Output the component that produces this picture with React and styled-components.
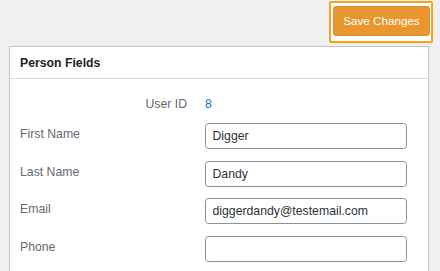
import React from 'react';
import styled, { createGlobalStyle } from 'styled-components';

const GlobalStyle = createGlobalStyle`
	html, body {
		margin: 0;
		padding: 0;
		background: #f0f0f1;
	}
	body {
		font-family: "Liberation Sans", Arial, sans-serif;
		color: #1d2327;
	}
`;

const fields = [
	{ label: 'First Name', value: 'Digger' },
	{ label: 'Last Name', value: 'Dandy' },
	{ label: 'Email', value: 'diggerdandy@testemail.com' },
	{ label: 'Phone', value: '' }
];

export default function App() {
	return (
		<Page>
			<GlobalStyle />
			<TopBar>
				<FocusRing>
					<SaveButton type="button">Save Changes</SaveButton>
				</FocusRing>
			</TopBar>
			<Panel>
				<PanelHeader>Person Fields</PanelHeader>
				<FieldGrid>
					<FieldLabel align="right" top="0">User ID</FieldLabel>
					<IdValue>8</IdValue>
					{fields.map((f) => (
						<React.Fragment key={f.label}>
							<FieldLabel>{f.label}</FieldLabel>
							<TextInput type="text" defaultValue={f.value} />
						</React.Fragment>
					))}
				</FieldGrid>
			</Panel>
		</Page>
	);
}

const Page = styled.div`
	width: 440px;
	height: 271px;
	overflow: hidden;
`;

const TopBar = styled.div`
	display: flex;
	justify-content: flex-end;
	padding: 1px 7px 0 0;
`;

const FocusRing = styled.div`
	display: flex;
	border: 2px solid #f5a31c;
	border-radius: 2px;
	padding: 3px 1px 5px 2px;
	background: #fff;
`;

const SaveButton = styled.button`
	width: 97px;
	height: 30px;
	padding: 0;
	border: 1px solid #dc8c2a;
	border-radius: 3px;
	background: #e9962f;
	color: #fff;
	font-family: "Liberation Sans", Arial, sans-serif;
	font-size: 11.7px;
	line-height: 14px;
	cursor: pointer;
`;

const Panel = styled.section`
	width: 420px;
	box-sizing: border-box;
	margin: 3px 0 0 9px;
	border: 1px solid #c3c4c7;
	background: #fff;
	padding-bottom: 24px;
`;

const PanelHeader = styled.h2`
	margin: 0;
	padding: 9px 10px 8px;
	border-bottom: 1px solid #dcdcde;
	font-size: 12.25px;
	line-height: 14px;
	font-weight: 700;
	color: #1d2327;
`;

const FieldGrid = styled.div`
	display: grid;
	grid-template-columns: 167px 202px;
	column-gap: 18px;
	row-gap: 11.75px;
	padding: 18px 0 0 10px;
	font-size: 12.25px;
	line-height: 14px;
`;

const FieldLabel = styled.label`
	padding-top: ${(props) => (props.top !== undefined ? props.top : '4px')};
	text-align: ${(props) => props.align || 'left'};
	color: #646970;
`;

const IdValue = styled.span`
	color: #2271b1;
`;

const TextInput = styled.input`
	box-sizing: border-box;
	width: 202px;
	height: 26px;
	margin: 0;
	padding: 0 6.5px;
	border: 1px solid #8c8f94;
	border-radius: 3.5px;
	background: #fff;
	color: #2c3338;
	font-family: "Liberation Sans", Arial, sans-serif;
	font-size: 12.25px;
	outline: none;
`;
